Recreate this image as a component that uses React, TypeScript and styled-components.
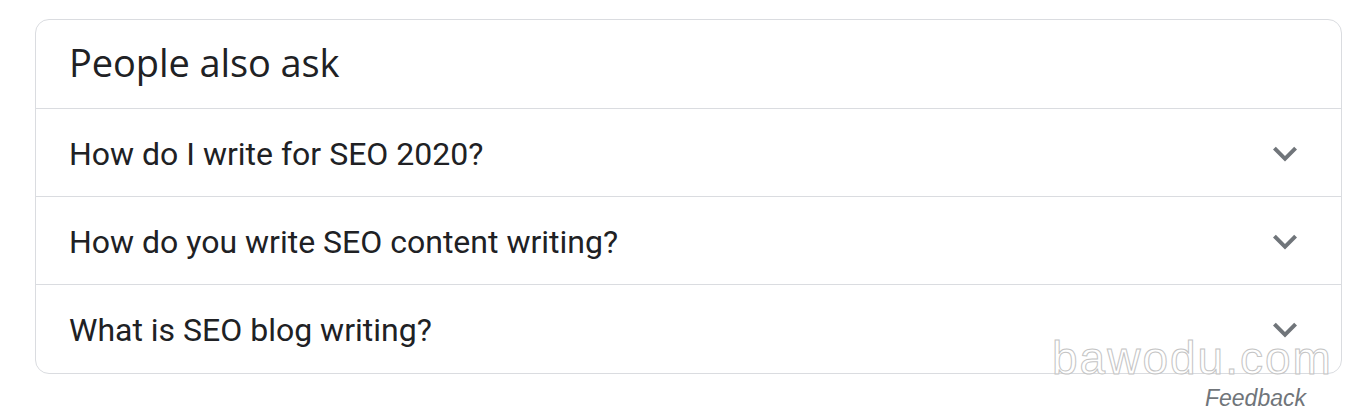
import styled, { createGlobalStyle } from 'styled-components'

const GlobalStyle = createGlobalStyle`
    html, body {
        margin: 0;
        padding: 0;
        background: #fff;
    }

    body {
        font-family: Roboto, "Liberation Sans", Arial, sans-serif;
        color: #202124;
    }
`

const Page = styled.div`
    position: relative;
    width: 1362px;
    height: 416px;
    padding: 19px 0 0 35px;
    box-sizing: border-box;
`

const Card = styled.div`
    width: 1307px;
    border: 1px solid #dadce0;
    border-radius: 14px;
    box-sizing: border-box;
    background: #fff;
`

const Header = styled.div`
    display: flex;
    align-items: center;
    height: 89px;
    padding: 0 33px 4px;
    box-sizing: border-box;
    border-bottom: 1px solid #dadce0;
`

const Title = styled.h2`
    margin: 0;
    font-family: "Open Sans", Roboto, sans-serif;
    font-size: 38px;
    font-weight: 400;
    letter-spacing: -0.1px;
    color: #202124;
`

const Row = styled.div<{ last?: boolean }>`
    display: flex;
    align-items: center;
    justify-content: space-between;
    height: 88px;
    padding: 2px 44px 0 33px;
    box-sizing: border-box;
    border-bottom: ${props => props.last ? 'none' : '1px solid #dadce0'};
`

const Question = styled.span`
    font-size: 32px;
    color: #202124;
`

const Chevron = styled.svg`
    width: 24px;
    height: 16px;
    flex-shrink: 0;
`

const Footer = styled.div`
    display: flex;
    justify-content: flex-end;
    width: 1307px;
    padding: 11px 36px 0 0;
    box-sizing: border-box;
`

const Feedback = styled.span`
    font-family: "Liberation Sans", Arial, sans-serif;
    font-style: italic;
    font-size: 23px;
    color: #70757a;
`

const Watermark = styled.div`
    position: absolute;
    left: 1052px;
    top: 331px;
    font-family: "Liberation Sans", Arial, sans-serif;
    font-size: 46px;
    letter-spacing: 2px;
    color: rgba(255, 255, 255, 0.85);
    -webkit-text-stroke: 1px #c4c4c4;
    pointer-events: none;
`

const questions = [
    'How do I write for SEO 2020?',
    'How do you write SEO content writing?',
    'What is SEO blog writing?',
]

export default function App() {
    return (
        <Page>
            <GlobalStyle />
            <Card>
                <Header>
                    <Title>People also ask</Title>
                </Header>
                {questions.map((q, i) => (
                    <Row key={q} last={i === questions.length - 1}>
                        <Question>{q}</Question>
                        <Chevron viewBox="6 8.2 12 8">
                            <path d="M16.59 8.59L12 13.17 7.41 8.59 6 10l6 6 6-6z" fill="#70757a" />
                        </Chevron>
                    </Row>
                ))}
            </Card>
            <Footer>
                <Feedback>Feedback</Feedback>
            </Footer>
            <Watermark>bawodu.com</Watermark>
        </Page>
    )
}
